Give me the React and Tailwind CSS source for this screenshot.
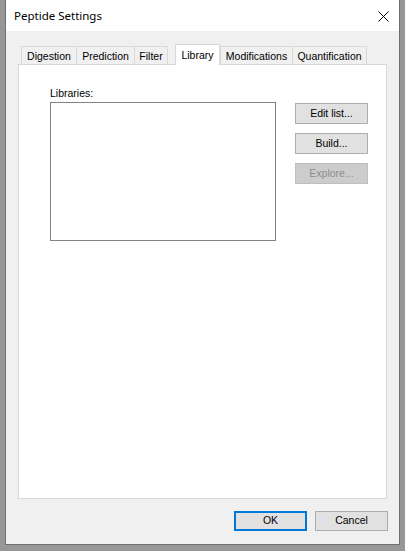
import React from "react";

const ui = { fontFamily: '"Liberation Sans", Arial, sans-serif' };
const title = { fontFamily: '"Noto Sans", "Open Sans", sans-serif' };

function Tab({ label, w, selected }) {
  if (selected) {
    return (
      <div
        className={`h-[21px] relative z-10 -mb-px bg-white border border-b-0 border-[#d9d9d9] flex items-start justify-center pt-[3px] text-[10.5px] text-black`}
        style={{ width: w }}
      >
        {label}
      </div>
    );
  }
  return (
    <div
      className="h-[18px] bg-[#f0f0f0] border border-b-0 border-r-0 last:border-r border-[#d9d9d9] flex items-center justify-center pt-[2px] text-[10.5px] text-black"
      style={{ width: w }}
    >
      {label}
    </div>
  );
}

function Btn({ children, disabled }) {
  return (
    <div
      className={`w-[73px] h-[21px] flex items-center justify-center text-[10.5px] border ${
        disabled
          ? "bg-[#cccccc] border-[#bfbfbf] text-[#8d8d8d]"
          : "bg-[#e1e1e1] border-[#adadad] text-black"
      }`}
    >
      {children}
    </div>
  );
}

export default function App() {
  return (
    <div className="w-[405px] h-[551px] bg-[#979797] flex px-[5px] pb-[6px]" style={ui}>
      <div className="flex-1 flex flex-col bg-[#f0f0f0] border border-t-0 border-[#6e6e6e]">
        <div className="h-[31px] bg-white flex items-center justify-between pl-[8px] pr-[10px]">
          <span className="text-[11.5px] text-black" style={title}>
            Peptide Settings
          </span>
          <svg width="11" height="11" viewBox="0 0 11 11" className="mt-[1px]">
            <path d="M0.5 0.5 L10.5 10.5 M10.5 0.5 L0.5 10.5" stroke="#000" strokeWidth="1" />
          </svg>
        </div>
        <div className="flex-1 flex flex-col px-[12px] pt-[13px] pb-[13px]">
          <div className="flex items-end h-[20px] pl-[3px]">
            <div className="flex items-end">
              <Tab label="Digestion" w={55} />
              <Tab label="Prediction" w={58} />
              <div className="h-[18px] w-[34px] bg-[#f0f0f0] border border-b-0 border-[#d9d9d9] flex items-center justify-center pt-[2px] text-[10.5px] text-black">
                Filter
              </div>
            </div>
            <div className="w-[7px]" />
            <Tab label="Library" w={45} selected />
            <div className="flex items-end">
              <Tab label="Modifications" w={72} />
              <Tab label="Quantification" w={75} />
            </div>
          </div>
          <div className="flex-1 bg-white border border-[#d9d9d9] pt-[22px] pl-[31px]">
            <div className="flex items-start">
              <div className="flex flex-col">
                <div className="text-[10.5px] text-black h-[13px] leading-[13px] mb-[2px]">Libraries:</div>
                <div className="w-[226px] h-[139px] bg-white border border-[#828282]" />
              </div>
              <div className="flex flex-col gap-[9px] ml-[19px] mt-[16px]">
                <Btn>Edit list...</Btn>
                <Btn>Build...</Btn>
                <Btn disabled>Explore...</Btn>
              </div>
            </div>
          </div>
          <div className="flex justify-end gap-[8px] mt-[12px]">
            <div className="w-[73px] h-[20px] bg-[#e1e1e1] border-2 border-[#0078d7] flex items-center justify-center text-[10.5px] text-black">
              OK
            </div>
            <div className="w-[73px] h-[20px] bg-[#e1e1e1] border border-[#adadad] flex items-center justify-center text-[10.5px] text-black mr-[-1px]">
              Cancel
            </div>
          </div>
        </div>
      </div>
    </div>
  );
}
